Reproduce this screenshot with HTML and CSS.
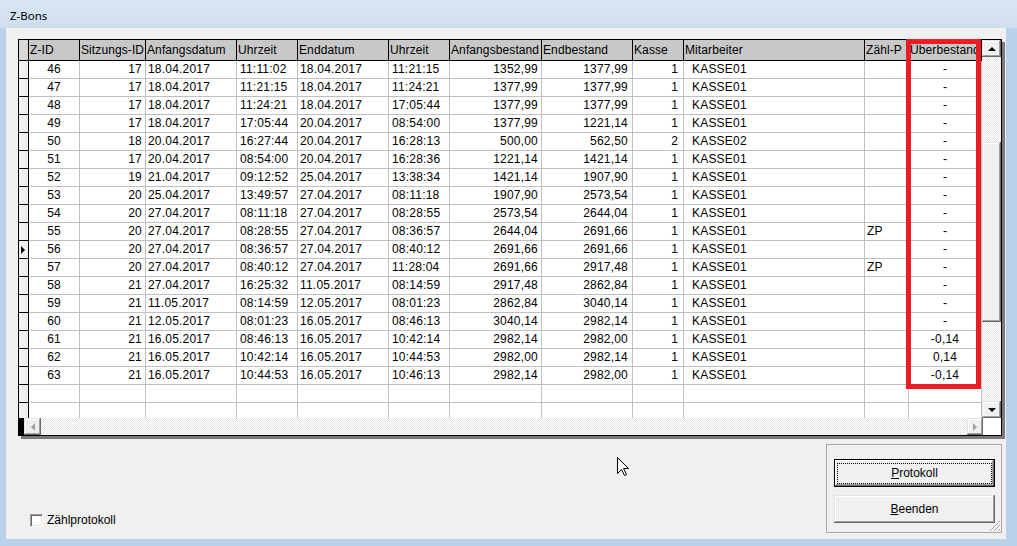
FILE: index.html
```html
<!DOCTYPE html>
<html lang="de">
<head>
<meta charset="utf-8">
<title>Z-Bons</title>
<link rel="stylesheet" href="styles.css">
</head>
<body>
<div class="window">
  <div class="titlebar">Z-Bons</div>
  <div class="client">
    <div class="grid">
      <div class="data">
        <div class="row head">
          <div class="c k0"></div><div class="c k1">Z-ID</div><div class="c k2">Sitzungs-ID</div><div class="c k3">Anfangsdatum</div><div class="c k4">Uhrzeit</div><div class="c k5">Enddatum</div><div class="c k6">Uhrzeit</div><div class="c k7">Anfangsbestand</div><div class="c k8">Endbestand</div><div class="c k9">Kasse</div><div class="c k10">Mitarbeiter</div><div class="c k11">Zähl-P</div><div class="c k12">Überbestand</div>
        </div>
        <div class="row"><div class="c k0"></div><div class="c k1">46</div><div class="c k2">17</div><div class="c k3">18.04.2017</div><div class="c k4">11:11:02</div><div class="c k5">18.04.2017</div><div class="c k6">11:21:15</div><div class="c k7">1352,99</div><div class="c k8">1377,99</div><div class="c k9">1</div><div class="c k10">KASSE01</div><div class="c k11"></div><div class="c k12">-</div></div>
        <div class="row"><div class="c k0"></div><div class="c k1">47</div><div class="c k2">17</div><div class="c k3">18.04.2017</div><div class="c k4">11:21:15</div><div class="c k5">18.04.2017</div><div class="c k6">11:24:21</div><div class="c k7">1377,99</div><div class="c k8">1377,99</div><div class="c k9">1</div><div class="c k10">KASSE01</div><div class="c k11"></div><div class="c k12">-</div></div>
        <div class="row"><div class="c k0"></div><div class="c k1">48</div><div class="c k2">17</div><div class="c k3">18.04.2017</div><div class="c k4">11:24:21</div><div class="c k5">18.04.2017</div><div class="c k6">17:05:44</div><div class="c k7">1377,99</div><div class="c k8">1377,99</div><div class="c k9">1</div><div class="c k10">KASSE01</div><div class="c k11"></div><div class="c k12">-</div></div>
        <div class="row"><div class="c k0"></div><div class="c k1">49</div><div class="c k2">17</div><div class="c k3">18.04.2017</div><div class="c k4">17:05:44</div><div class="c k5">20.04.2017</div><div class="c k6">08:54:00</div><div class="c k7">1377,99</div><div class="c k8">1221,14</div><div class="c k9">1</div><div class="c k10">KASSE01</div><div class="c k11"></div><div class="c k12">-</div></div>
        <div class="row"><div class="c k0"></div><div class="c k1">50</div><div class="c k2">18</div><div class="c k3">20.04.2017</div><div class="c k4">16:27:44</div><div class="c k5">20.04.2017</div><div class="c k6">16:28:13</div><div class="c k7">500,00</div><div class="c k8">562,50</div><div class="c k9">2</div><div class="c k10">KASSE02</div><div class="c k11"></div><div class="c k12">-</div></div>
        <div class="row"><div class="c k0"></div><div class="c k1">51</div><div class="c k2">17</div><div class="c k3">20.04.2017</div><div class="c k4">08:54:00</div><div class="c k5">20.04.2017</div><div class="c k6">16:28:36</div><div class="c k7">1221,14</div><div class="c k8">1421,14</div><div class="c k9">1</div><div class="c k10">KASSE01</div><div class="c k11"></div><div class="c k12">-</div></div>
        <div class="row"><div class="c k0"></div><div class="c k1">52</div><div class="c k2">19</div><div class="c k3">21.04.2017</div><div class="c k4">09:12:52</div><div class="c k5">25.04.2017</div><div class="c k6">13:38:34</div><div class="c k7">1421,14</div><div class="c k8">1907,90</div><div class="c k9">1</div><div class="c k10">KASSE01</div><div class="c k11"></div><div class="c k12">-</div></div>
        <div class="row"><div class="c k0"></div><div class="c k1">53</div><div class="c k2">20</div><div class="c k3">25.04.2017</div><div class="c k4">13:49:57</div><div class="c k5">27.04.2017</div><div class="c k6">08:11:18</div><div class="c k7">1907,90</div><div class="c k8">2573,54</div><div class="c k9">1</div><div class="c k10">KASSE01</div><div class="c k11"></div><div class="c k12">-</div></div>
        <div class="row"><div class="c k0"></div><div class="c k1">54</div><div class="c k2">20</div><div class="c k3">27.04.2017</div><div class="c k4">08:11:18</div><div class="c k5">27.04.2017</div><div class="c k6">08:28:55</div><div class="c k7">2573,54</div><div class="c k8">2644,04</div><div class="c k9">1</div><div class="c k10">KASSE01</div><div class="c k11"></div><div class="c k12">-</div></div>
        <div class="row"><div class="c k0"></div><div class="c k1">55</div><div class="c k2">20</div><div class="c k3">27.04.2017</div><div class="c k4">08:28:55</div><div class="c k5">27.04.2017</div><div class="c k6">08:36:57</div><div class="c k7">2644,04</div><div class="c k8">2691,66</div><div class="c k9">1</div><div class="c k10">KASSE01</div><div class="c k11">ZP</div><div class="c k12">-</div></div>
        <div class="row"><div class="c k0"><span class="cur"></span></div><div class="c k1">56</div><div class="c k2">20</div><div class="c k3">27.04.2017</div><div class="c k4">08:36:57</div><div class="c k5">27.04.2017</div><div class="c k6">08:40:12</div><div class="c k7">2691,66</div><div class="c k8">2691,66</div><div class="c k9">1</div><div class="c k10">KASSE01</div><div class="c k11"></div><div class="c k12">-</div></div>
        <div class="row"><div class="c k0"></div><div class="c k1">57</div><div class="c k2">20</div><div class="c k3">27.04.2017</div><div class="c k4">08:40:12</div><div class="c k5">27.04.2017</div><div class="c k6">11:28:04</div><div class="c k7">2691,66</div><div class="c k8">2917,48</div><div class="c k9">1</div><div class="c k10">KASSE01</div><div class="c k11">ZP</div><div class="c k12">-</div></div>
        <div class="row"><div class="c k0"></div><div class="c k1">58</div><div class="c k2">21</div><div class="c k3">27.04.2017</div><div class="c k4">16:25:32</div><div class="c k5">11.05.2017</div><div class="c k6">08:14:59</div><div class="c k7">2917,48</div><div class="c k8">2862,84</div><div class="c k9">1</div><div class="c k10">KASSE01</div><div class="c k11"></div><div class="c k12">-</div></div>
        <div class="row"><div class="c k0"></div><div class="c k1">59</div><div class="c k2">21</div><div class="c k3">11.05.2017</div><div class="c k4">08:14:59</div><div class="c k5">12.05.2017</div><div class="c k6">08:01:23</div><div class="c k7">2862,84</div><div class="c k8">3040,14</div><div class="c k9">1</div><div class="c k10">KASSE01</div><div class="c k11"></div><div class="c k12">-</div></div>
        <div class="row"><div class="c k0"></div><div class="c k1">60</div><div class="c k2">21</div><div class="c k3">12.05.2017</div><div class="c k4">08:01:23</div><div class="c k5">16.05.2017</div><div class="c k6">08:46:13</div><div class="c k7">3040,14</div><div class="c k8">2982,14</div><div class="c k9">1</div><div class="c k10">KASSE01</div><div class="c k11"></div><div class="c k12">-</div></div>
        <div class="row"><div class="c k0"></div><div class="c k1">61</div><div class="c k2">21</div><div class="c k3">16.05.2017</div><div class="c k4">08:46:13</div><div class="c k5">16.05.2017</div><div class="c k6">10:42:14</div><div class="c k7">2982,14</div><div class="c k8">2982,00</div><div class="c k9">1</div><div class="c k10">KASSE01</div><div class="c k11"></div><div class="c k12">-0,14</div></div>
        <div class="row"><div class="c k0"></div><div class="c k1">62</div><div class="c k2">21</div><div class="c k3">16.05.2017</div><div class="c k4">10:42:14</div><div class="c k5">16.05.2017</div><div class="c k6">10:44:53</div><div class="c k7">2982,00</div><div class="c k8">2982,14</div><div class="c k9">1</div><div class="c k10">KASSE01</div><div class="c k11"></div><div class="c k12">0,14</div></div>
        <div class="row"><div class="c k0"></div><div class="c k1">63</div><div class="c k2">21</div><div class="c k3">16.05.2017</div><div class="c k4">10:44:53</div><div class="c k5">16.05.2017</div><div class="c k6">10:46:13</div><div class="c k7">2982,14</div><div class="c k8">2982,00</div><div class="c k9">1</div><div class="c k10">KASSE01</div><div class="c k11"></div><div class="c k12">-0,14</div></div>
        <div class="row"><div class="c k0"></div><div class="c k1"></div><div class="c k2"></div><div class="c k3"></div><div class="c k4"></div><div class="c k5"></div><div class="c k6"></div><div class="c k7"></div><div class="c k8"></div><div class="c k9"></div><div class="c k10"></div><div class="c k11"></div><div class="c k12"></div></div>
        <div class="row"><div class="c k0"></div><div class="c k1"></div><div class="c k2"></div><div class="c k3"></div><div class="c k4"></div><div class="c k5"></div><div class="c k6"></div><div class="c k7"></div><div class="c k8"></div><div class="c k9"></div><div class="c k10"></div><div class="c k11"></div><div class="c k12"></div></div>
      </div>
      <div class="vscroll">
        <div class="sbtn b3d"><span class="tri-up"></span></div>
        <div class="vtrack">
          <div class="thumb b3d"></div>
        </div>
        <div class="sbtn b3d"><span class="tri-down"></span></div>
      </div>
      <div class="hscroll">
        <div class="hblk"></div>
        <div class="hbtn b3d"><span class="tri-left"></span></div>
        <div class="htrack"></div>
        <div class="hbtn hbtn-r b3d"><span class="tri-right"></span></div>
        <div class="corner"></div>
      </div>
    </div>
    <div class="bottom">
      <label class="chk"><span class="box"></span><span>Zählprotokoll</span></label>
      <div class="panel">
        <div class="btn def"><span><u>P</u>rotokoll</span></div>
        <div class="btn"><span><u>B</u>eenden</span></div>
        <svg class="grip" width="12" height="12" viewBox="0 0 12 12">
          <path d="M11 1 L1 11 M11 5 L5 11 M11 9 L9 11" stroke="#a0a0a0" stroke-width="1" fill="none"/>
          <path d="M11 2 L2 11 M11 6 L6 11 M11 10 L10 11" stroke="#ffffff" stroke-width="1" fill="none"/>
        </svg>
      </div>
    </div>
  </div>
  <div class="mark"></div>
  <svg class="pointer" width="13" height="20" viewBox="0 0 13 20">
    <path d="M0.5 0.5 V16.5 L4.5 12.5 L7.5 18.5 L9.5 17.5 L6.5 11.5 H11.5 Z" fill="#fff" stroke="#000" stroke-width="1" stroke-linejoin="miter"/>
  </svg>
</div>
</body>
</html>
```
FILE: styles.css
```css
* { box-sizing: border-box; }
html, body { margin: 0; padding: 0; }
body {
  width: 1017px;
  height: 546px;
  overflow: hidden;
  font-family: "Liberation Sans", Arial, sans-serif;
  font-size: 12px;
  color: #000;
  background: #b9d1ea;
}
.window {
  position: relative;
  width: 1017px;
  height: 546px;
  display: flex;
  flex-direction: column;
  padding: 0 11px 7px 6px;
  background: linear-gradient(to bottom, #d9e5f2 0, #cfdeef 28px, #b9d1ea 29px, #b9d1ea 100%);
}
.titlebar {
  height: 28px;
  flex: none;
  padding: 9px 0 0 4px;
  font-family: "Noto Sans", "Open Sans", sans-serif;
  font-size: 11.5px;
  line-height: 14px;
}
.client {
  flex: 1;
  background: #f0f0f0;
  display: flex;
  flex-direction: column;
}
.grid {
  margin: 11px 0 0 12px;
  width: 984px;
  height: 397px;
  border: 1px solid #000;
  box-shadow: 3px 3px 0 #7a7a7a;
  display: grid;
  grid-template-columns: 963px 19px;
  grid-template-rows: 378px 17px;
  background: #fff;
}
.data { overflow: hidden; }
.row { display: flex; height: 18px; }
.row.head { height: 21px; }
.c {
  flex: none;
  height: 100%;
  border-right: 1px solid #c0c0c0;
  border-bottom: 1px solid #c0c0c0;
  white-space: nowrap;
  overflow: hidden;
  line-height: 17px;
  padding: 0 2px;
  letter-spacing: 0.2px;
}
.head .c {
  background: #c8c8c8;
  border-color: #000;
  line-height: 20px;
  padding: 0 1px;
  text-align: left;
  letter-spacing: 0.1px;
}
.k0 {
  width: 10px;
  background: #f0f0f0;
  border-color: #000 !important;
  padding: 0 !important;
  display: flex;
  align-items: center;
}
.head .k0 { background: #d8d8d8; }
.k1 { width: 51px; text-align: center; }
.k2 { width: 66px; text-align: right; padding-right: 3px; }
.k3 { width: 91px; }
.k4 { width: 61px; padding-left: 3px; }
.k5 { width: 91px; }
.k6 { width: 61px; padding-left: 3px; }
.k7 { width: 92px; text-align: right; padding-right: 3px; }
.k8 { width: 91px; text-align: right; padding-right: 4px; }
.k9 { width: 51px; text-align: right; padding-right: 5px; }
.k10 { width: 181px; padding-left: 8px; }
.k11 { width: 44px; padding-left: 2px; }
.k12 { width: 73px; text-align: center; }
.cur {
  width: 0;
  height: 0;
  margin-left: 2px;
  border-top: 4px solid transparent;
  border-bottom: 4px solid transparent;
  border-left: 4px solid #000;
}
.b3d {
  background: #f0f0f0;
  box-shadow: inset -1px -1px #696969, inset 1px 1px #e3e3e3, inset -2px -2px #a0a0a0, inset 2px 2px #fff;
}
.checker {
  background-color: #fff;
}
.vscroll {
  display: flex;
  flex-direction: column;
  background-color: #fff;
  background-image: repeating-conic-gradient(#e6e6e6 0 25%, #fff 0 50%);
  background-size: 2px 2px;
}
.sbtn {
  flex: none;
  height: 17px;
  display: flex;
  align-items: center;
  justify-content: center;
}
.vtrack { flex: 1; padding-top: 85px; }
.thumb { height: 180px; }
.tri-up {
  width: 0; height: 0;
  border-left: 4px solid transparent;
  border-right: 4px solid transparent;
  border-bottom: 4px solid #000;
}
.tri-down {
  width: 0; height: 0;
  border-left: 4px solid transparent;
  border-right: 4px solid transparent;
  border-top: 4px solid #000;
}
.tri-left {
  width: 0; height: 0;
  border-top: 4px solid transparent;
  border-bottom: 4px solid transparent;
  border-right: 4px solid #a0a0a0;
}
.tri-right {
  width: 0; height: 0;
  border-top: 4px solid transparent;
  border-bottom: 4px solid transparent;
  border-left: 4px solid #a0a0a0;
}
.hscroll {
  grid-column: 1 / span 2;
  display: flex;
}
.hblk { width: 5px; background: #000; }
.hbtn {
  width: 17px;
  display: flex;
  align-items: center;
  justify-content: center;
}
.hbtn-r { width: 16px; }
.htrack {
  flex: 1;
  background-color: #fff;
  background-image: repeating-conic-gradient(#e6e6e6 0 25%, #fff 0 50%);
  background-size: 2px 2px;
}
.corner { width: 18px; background: #fff; }
.bottom {
  display: flex;
  justify-content: space-between;
  align-items: flex-end;
  margin-top: 8px;
  padding-left: 24px;
}
.chk {
  display: flex;
  align-items: center;
  height: 15px;
  margin-bottom: 5px;
  line-height: 15px;
}
.box {
  width: 13px;
  height: 13px;
  margin-right: 4px;
  background: #fff;
  border-top: 1px solid #a0a0a0;
  border-left: 1px solid #a0a0a0;
  border-right: 1px solid #fff;
  border-bottom: 1px solid #fff;
  box-shadow: inset 1px 1px #696969, inset -1px -1px #e3e3e3;
}
.panel {
  position: relative;
  width: 176px;
  height: 89px;
  margin-right: 4px;
  border: 1px solid #a9a9a9;
  padding: 14px 6px 0 7px;
  display: flex;
  flex-direction: column;
  gap: 8px;
}
.btn {
  position: relative;
  width: 161px;
  height: 28px;
  display: flex;
  align-items: center;
  justify-content: center;
  background: #f0f0f0;
  box-shadow: inset -1px -1px #696969, inset 1px 1px #e3e3e3, inset -2px -2px #a0a0a0, inset 2px 2px #fff;
  font-size: 12px;
}
.btn.def {
  border: 1px solid #000;
  box-shadow: inset -1px -1px #696969, inset 1px 1px #fff, inset -2px -2px #a0a0a0;
}
.btn.def::after {
  content: "";
  position: absolute;
  top: 3px;
  left: 2px;
  right: 2px;
  bottom: 2px;
  border: 1px dotted #000;
}
.grip {
  position: absolute;
  right: 0;
  bottom: 0;
}
.mark {
  position: absolute;
  left: 906px;
  top: 39px;
  width: 75px;
  height: 350px;
  border: 5px solid #ed1c24;
}
.pointer {
  position: absolute;
  left: 617px;
  top: 457px;
}
```
